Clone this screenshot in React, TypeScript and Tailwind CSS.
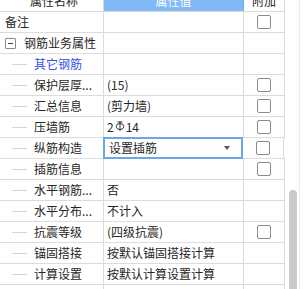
import React from 'react';

type Row = {
  name: string;
  value?: React.ReactNode;
  child?: boolean;
  group?: boolean;
  blue?: boolean;
  check?: boolean;
  select?: boolean;
};

const rows: Row[] = [
  { name: '备注', check: true },
  { name: '钢筋业务属性', group: true },
  { name: '其它钢筋', child: true, blue: true },
  { name: '保护层厚...', child: true, value: '(15)', check: true },
  { name: '汇总信息', child: true, value: '(剪力墙)', check: true },
  { name: '压墙筋', child: true, value: 'rebar', check: true },
  { name: '纵筋构造', child: true, value: '设置插筋', check: true, select: true },
  { name: '插筋信息', child: true, check: true },
  { name: '水平钢筋...', child: true, value: '否' },
  { name: '水平分布...', child: true, value: '不计入' },
  { name: '抗震等级', child: true, value: '(四级抗震)', check: true },
  { name: '锚固搭接', child: true, value: '按默认锚固搭接计算' },
  { name: '计算设置', child: true, value: '按默认计算设置计算' },
  { name: '', child: true },
];

function RebarMark() {
  return (
    <svg width="10" height="12" viewBox="0 0 10 12" className="inline-block mx-[1px] -mt-[2px]">
      <ellipse cx="5" cy="6.5" rx="3.8" ry="3" fill="none" stroke="#333" strokeWidth="1" />
      <line x1="5" y1="1" x2="5" y2="11" stroke="#333" strokeWidth="1" />
      <line x1="2.5" y1="2" x2="7.5" y2="2" stroke="#333" strokeWidth="1" />
    </svg>
  );
}

function Checkbox() {
  return <div className="w-[14px] h-[14px] border border-[#8a8a8a] rounded-[2px] bg-white" />;
}

export default function App() {
  return (
    <div
      className="w-[304px] h-[289px] overflow-hidden bg-white flex text-[12px] text-[#262626]"
      style={{ fontFamily: '"Noto Sans CJK SC", "Microsoft YaHei", sans-serif' }}
    >
      <div className="w-[285px] flex flex-col shrink-0">
        {/* header, scrolled so the titles are half hidden */}
        <div className="flex h-[12px] border-b border-[#d9d9d9] shrink-0">
          <div className="w-[104px] border-r border-[#d9d9d9] overflow-hidden flex justify-center">
            <span className="block leading-[12px] -mt-[5px] pl-[5px]">属性名称</span>
          </div>
          <div className="w-[140px] border-r border-[#6fa8e6] bg-[#80b9f6] overflow-hidden flex justify-center">
            <span className="block leading-[12px] -mt-[5px] text-white">属性值</span>
          </div>
          <div className="w-[41px] border-r border-[#d9d9d9] overflow-hidden flex justify-center">
            <span className="block leading-[12px] -mt-[5px]">附加</span>
          </div>
        </div>

        {rows.map((r, i) => (
          <div key={i} className="flex h-[21px] border-b border-[#dcdcdc] shrink-0">
            <div className="w-[104px] border-r border-[#dcdcdc] flex items-center overflow-hidden whitespace-nowrap">
              {r.group ? (
                <>
                  <div className="ml-[5px] w-[11px] h-[11px] border border-[#8a8a8a] rounded-[1px] flex items-center justify-center">
                    <div className="w-[5px] h-[1px] bg-[#444]" />
                  </div>
                  <span className="ml-[8px]">{r.name}</span>
                </>
              ) : r.child ? (
                <>
                  <div className="ml-[12px] w-[15px] h-[1px] bg-[#d4d4d4]" />
                  <span className={'ml-[7px] ' + (r.blue ? 'text-[#3253e8]' : '')}>{r.name}</span>
                </>
              ) : (
                <span className="ml-[5px]">{r.name}</span>
              )}
            </div>
            {r.select ? (
              <div className="w-[140px] border-2 border-[#6aa7e6] -ml-[1px] -my-[1px] h-[22px] flex items-center justify-between pl-[4px] pr-[11px] bg-white z-10">
                <span>{r.value}</span>
                <svg width="6" height="4" viewBox="0 0 6 4">
                  <path d="M0 0 H6 L3 4 Z" fill="#555" />
                </svg>
              </div>
            ) : (
              <div className="w-[140px] border-r border-[#dcdcdc] flex items-center pl-[3px] whitespace-nowrap overflow-hidden">
                {r.value === 'rebar' ? (
                  <span className="flex items-center">
                    2
                    <RebarMark />
                    14
                  </span>
                ) : (
                  r.value
                )}
              </div>
            )}
            <div className={'border-r border-[#dcdcdc] flex items-center justify-center ' + (r.select ? '-ml-[1px] w-[42px]' : 'w-[41px]')}>
              {r.check && <Checkbox />}
            </div>
          </div>
        ))}
      </div>

      {/* scrollbar */}
      <div className="w-[19px] flex">
        <div className="w-[15px] flex flex-col pt-[190px] pl-[4px] border-r border-[#ebebeb]">
          <div className="w-[8px] flex-1 bg-[#c9c9c9] rounded-t-[4px]" />
        </div>
      </div>
    </div>
  );
}
